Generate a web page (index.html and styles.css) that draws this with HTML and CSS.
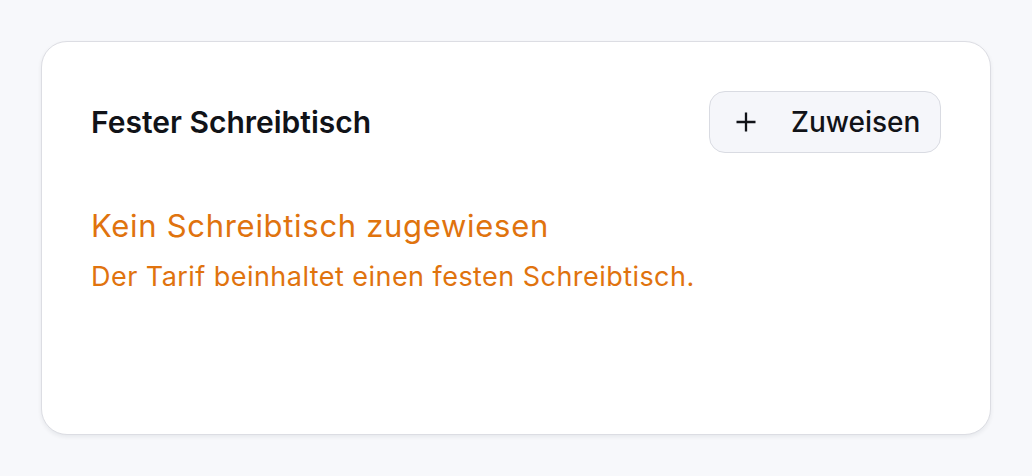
FILE: index.html
```html
<!DOCTYPE html>
<html lang="de">
<head>
<meta charset="utf-8">
<link rel="stylesheet" href="styles.css">
</head>
<body>
<div class="page">
  <section class="card">
    <header class="card-head">
      <h2 class="title">Fester Schreibtisch</h2>
      <button class="btn" type="button">
        <svg class="plus" width="22" height="22" viewBox="0 0 22 22" aria-hidden="true"><path d="M11 1.5v19M1.5 11h19" stroke="#111318" stroke-width="2.3" fill="none"/></svg>
        <span>Zuweisen</span>
      </button>
    </header>
    <div class="empty">
      <p class="empty-title">Kein Schreibtisch zugewiesen</p>
      <p class="empty-text">Der Tarif beinhaltet einen festen Schreibtisch.</p>
    </div>
  </section>
</div>
</body>
</html>
```
FILE: styles.css
```css
* { box-sizing: border-box; }
html, body { margin: 0; padding: 0; }
body {
  background: #f7f8fb;
  font-family: Inter, "Noto Sans", sans-serif;
  width: 1032px;
  height: 476px;
}
.page { padding: 41px; }
.card {
  width: 950px;
  height: 394px;
  background: #fff;
  border: 1.5px solid #dcdde3;
  border-radius: 26px;
  box-shadow: 0 2px 4px rgba(20, 24, 40, 0.07);
  padding: 49px 49px;
}
.card-head {
  display: flex;
  justify-content: space-between;
  align-items: center;
  height: 62px;
}
.title {
  margin: 0;
  font-size: 30px;
  font-weight: 600;
  color: #111318;
}
.btn {
  display: flex;
  align-items: center;
  gap: 34px;
  height: 62px;
  width: 232px;
  padding: 0 20px 0 25px;
  background: #f5f6fa;
  border: 1.5px solid #d9dbe2;
  border-radius: 16px;
  font-family: inherit;
  font-size: 28px;
  font-weight: 500;
  color: #111318;
  white-space: nowrap;
}
.plus { flex: none; }
.empty { margin-top: 54px; }
.empty-title {
  margin: 0;
  font-size: 31px;
  line-height: 38px;
  letter-spacing: 0.7px;
  color: #e0730e;
}
.empty-text {
  margin: 16px 0 0;
  font-size: 27px;
  line-height: 32px;
  letter-spacing: 0.45px;
  color: #e0730e;
}
```
